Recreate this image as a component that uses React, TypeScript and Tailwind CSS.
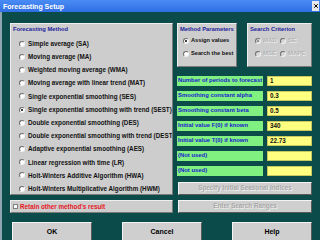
import { X } from "lucide-react";

const methods = [
  "Simple average (SA)",
  "Moving average (MA)",
  "Weighted moving average (WMA)",
  "Moving average with linear trend (MAT)",
  "Single exponential smoothing (SES)",
  "Single exponential smoothing with trend (SEST)",
  "Double exponential smoothing (DES)",
  "Double exponential smoothing with trend (DEST)",
  "Adaptive exponential smoothing (AES)",
  "Linear regression with time (LR)",
  "Holt-Winters Additive Algorithm (HWA)",
  "Holt-Winters Multiplicative Algorithm (HWM)",
];

const fields = [
  { label: "Number of periods to forecast", value: "1" },
  { label: "Smoothing constant alpha", value: "0.3" },
  { label: "Smoothing constant beta", value: "0.5" },
  { label: "Initial value F(0) if known", value: "340" },
  { label: "Initial value T(0) if known", value: "22.73" },
  { label: "(Not used)", value: "" },
  { label: "(Not used)", value: "" },
];

function Radio({ checked = false, disabled = false }: { checked?: boolean; disabled?: boolean }) {
  return (
    <span
      className={`flex h-[6px] w-[6px] shrink-0 items-center justify-center rounded-full border border-t-[#707070] border-l-[#707070] border-r-[#f0f0f0] border-b-[#f0f0f0] ${
        disabled ? "bg-[#d8d8d8]" : "bg-white"
      }`}
    >
      {checked && <span className={`h-[2px] w-[2px] rounded-full ${disabled ? "bg-[#808080]" : "bg-black"}`} />}
    </span>
  );
}

function Panel({ className, children }: { className?: string; children: React.ReactNode }) {
  return (
    <div
      className={`border border-t-[#eeeeee] border-l-[#eeeeee] border-r-[#7a7a7a] border-b-[#7a7a7a] bg-[#cdcdcd] ${className ?? ""}`}
    >
      {children}
    </div>
  );
}

function Legend({ children }: { children: React.ReactNode }) {
  return (
    <div className="h-[10px] whitespace-nowrap pl-[2px] text-[5.8px] font-bold leading-[8px] text-[#22229a]">
      {children}
    </div>
  );
}

function Button({ children, disabled = false, className }: { children: React.ReactNode; disabled?: boolean; className?: string }) {
  return (
    <div
      className={`flex items-center justify-center border border-t-[#f4f4f4] border-l-[#f4f4f4] border-r-[#5a5a5a] border-b-[#5a5a5a] bg-[#cfcfcf] font-bold ${
        disabled ? "text-[#a8a8a8] [text-shadow:1px_1px_0_#eeeeee]" : "text-black"
      } ${className ?? ""}`}
    >
      {children}
    </div>
  );
}

export default function App() {
  return (
    <div className="flex h-[240px] w-[320px] flex-col overflow-hidden bg-[#0b4b49] font-['Liberation_Sans',Arial,sans-serif]">
      {/* title bar */}
      <div className="flex h-[12px] shrink-0 items-center justify-between bg-gradient-to-b from-[#4a8cf4] to-[#2f6ee4] pl-[3px]">
        <span className="text-[7px] font-bold leading-none text-white">Forecasting Setup</span>
        <span className="mr-[1px] flex h-[10px] w-[7px] items-center justify-center bg-[#e8e8e8]">
          <X className="h-[6px] w-[6px] text-black" strokeWidth={4} />
        </span>
      </div>

      <div className="flex flex-1 border-l-2 border-[#8fa6b0]">
        <div className="flex flex-1 flex-col">
          <div className="flex gap-[4px] pl-[8px] pt-[11px]">
            {/* left column */}
            <div className="flex w-[163px] flex-col gap-[5px]">
              <Panel className="h-[172px] overflow-hidden pt-[1px]">
                <Legend>Forecasting Method</Legend>
                <div className="pt-[2px]">
                  {methods.map((m, i) => (
                    <div key={m} className="flex h-[13.2px] items-center gap-[3px] pl-[8px]">
                      <Radio checked={i === 5} />
                      <span className="whitespace-nowrap text-[6.3px] font-bold text-[#111]">{m}</span>
                    </div>
                  ))}
                </div>
              </Panel>
              <Panel className="flex h-[13px] items-center gap-[2px] pl-[2px]">
                <span className="h-[5px] w-[5px] border border-[#808080] bg-white" />
                <span className="whitespace-nowrap text-[6.3px] font-bold text-[#e8141e]">Retain other method&apos;s result</span>
              </Panel>
            </div>

            {/* right column */}
            <div className="flex w-[135px] flex-col">
              <div className="flex h-[44px] gap-[10px]">
                <Panel className="w-[60px] pt-[1px]">
                  <Legend>Method Parameters</Legend>
                  <div className="flex flex-col gap-[4px] pl-[5px] pt-[1px]">
                    <div className="flex h-[9px] items-center gap-[2px]">
                      <Radio checked />
                      <span className="whitespace-nowrap text-[5.7px] font-bold text-[#111]">Assign values</span>
                    </div>
                    <div className="flex h-[9px] items-center gap-[2px]">
                      <Radio />
                      <span className="whitespace-nowrap text-[5.7px] font-bold text-[#111]">Search the best</span>
                    </div>
                  </div>
                </Panel>
                <Panel className="w-[65px] pt-[1px]">
                  <Legend>Search Criterion</Legend>
                  <div className="grid grid-cols-[25px_1fr] gap-y-[4px] pl-[7px] pt-[1px]">
                    {[
                      { t: "MAD", c: true },
                      { t: "SE", c: false },
                      { t: "MSE", c: false },
                      { t: "MAPE", c: false },
                    ].map((o) => (
                      <div key={o.t} className="flex h-[9px] items-center gap-[2px]">
                        <Radio checked={o.c} disabled />
                        <span className="text-[6px] font-bold text-[#b4b4b4] [text-shadow:1px_1px_0_#eeeeee]">{o.t}</span>
                      </div>
                    ))}
                  </div>
                </Panel>
              </div>

              <div className="mt-[9px] flex flex-col gap-[5.5px]">
                {fields.map((f, i) => (
                  <div key={i} className="flex h-[9.5px] gap-[4px]">
                    <div className="flex w-[86px] items-center overflow-hidden bg-[#80f080] pl-[1px]">
                      <span className="whitespace-nowrap text-[5.9px] font-bold text-[#1a1ad0]">{f.label}</span>
                    </div>
                    <div className="flex w-[45px] items-center border border-[#c8c860] bg-[#ffff80] pl-[2px]">
                      <span className="text-[6.3px] font-bold text-[#111]">{f.value}</span>
                    </div>
                  </div>
                ))}
              </div>

              <div className="mt-[6px] flex flex-col gap-[5px] pl-[1px]">
                <Button disabled className="h-[13px] text-[6.3px]">
                  Specify Initial Seasonal Indices
                </Button>
                <Button disabled className="h-[13px] text-[6.3px]">
                  Enter Search Ranges
                </Button>
              </div>
            </div>
          </div>

          {/* bottom buttons */}
          <div className="mt-[9px] flex gap-[30px] pl-[10px]">
            <Button className="h-[20px] w-[80px] text-[7px]">OK</Button>
            <Button className="h-[20px] w-[80px] text-[7px]">Cancel</Button>
            <Button className="h-[20px] w-[80px] text-[7px]">Help</Button>
          </div>
        </div>
      </div>
    </div>
  );
}
